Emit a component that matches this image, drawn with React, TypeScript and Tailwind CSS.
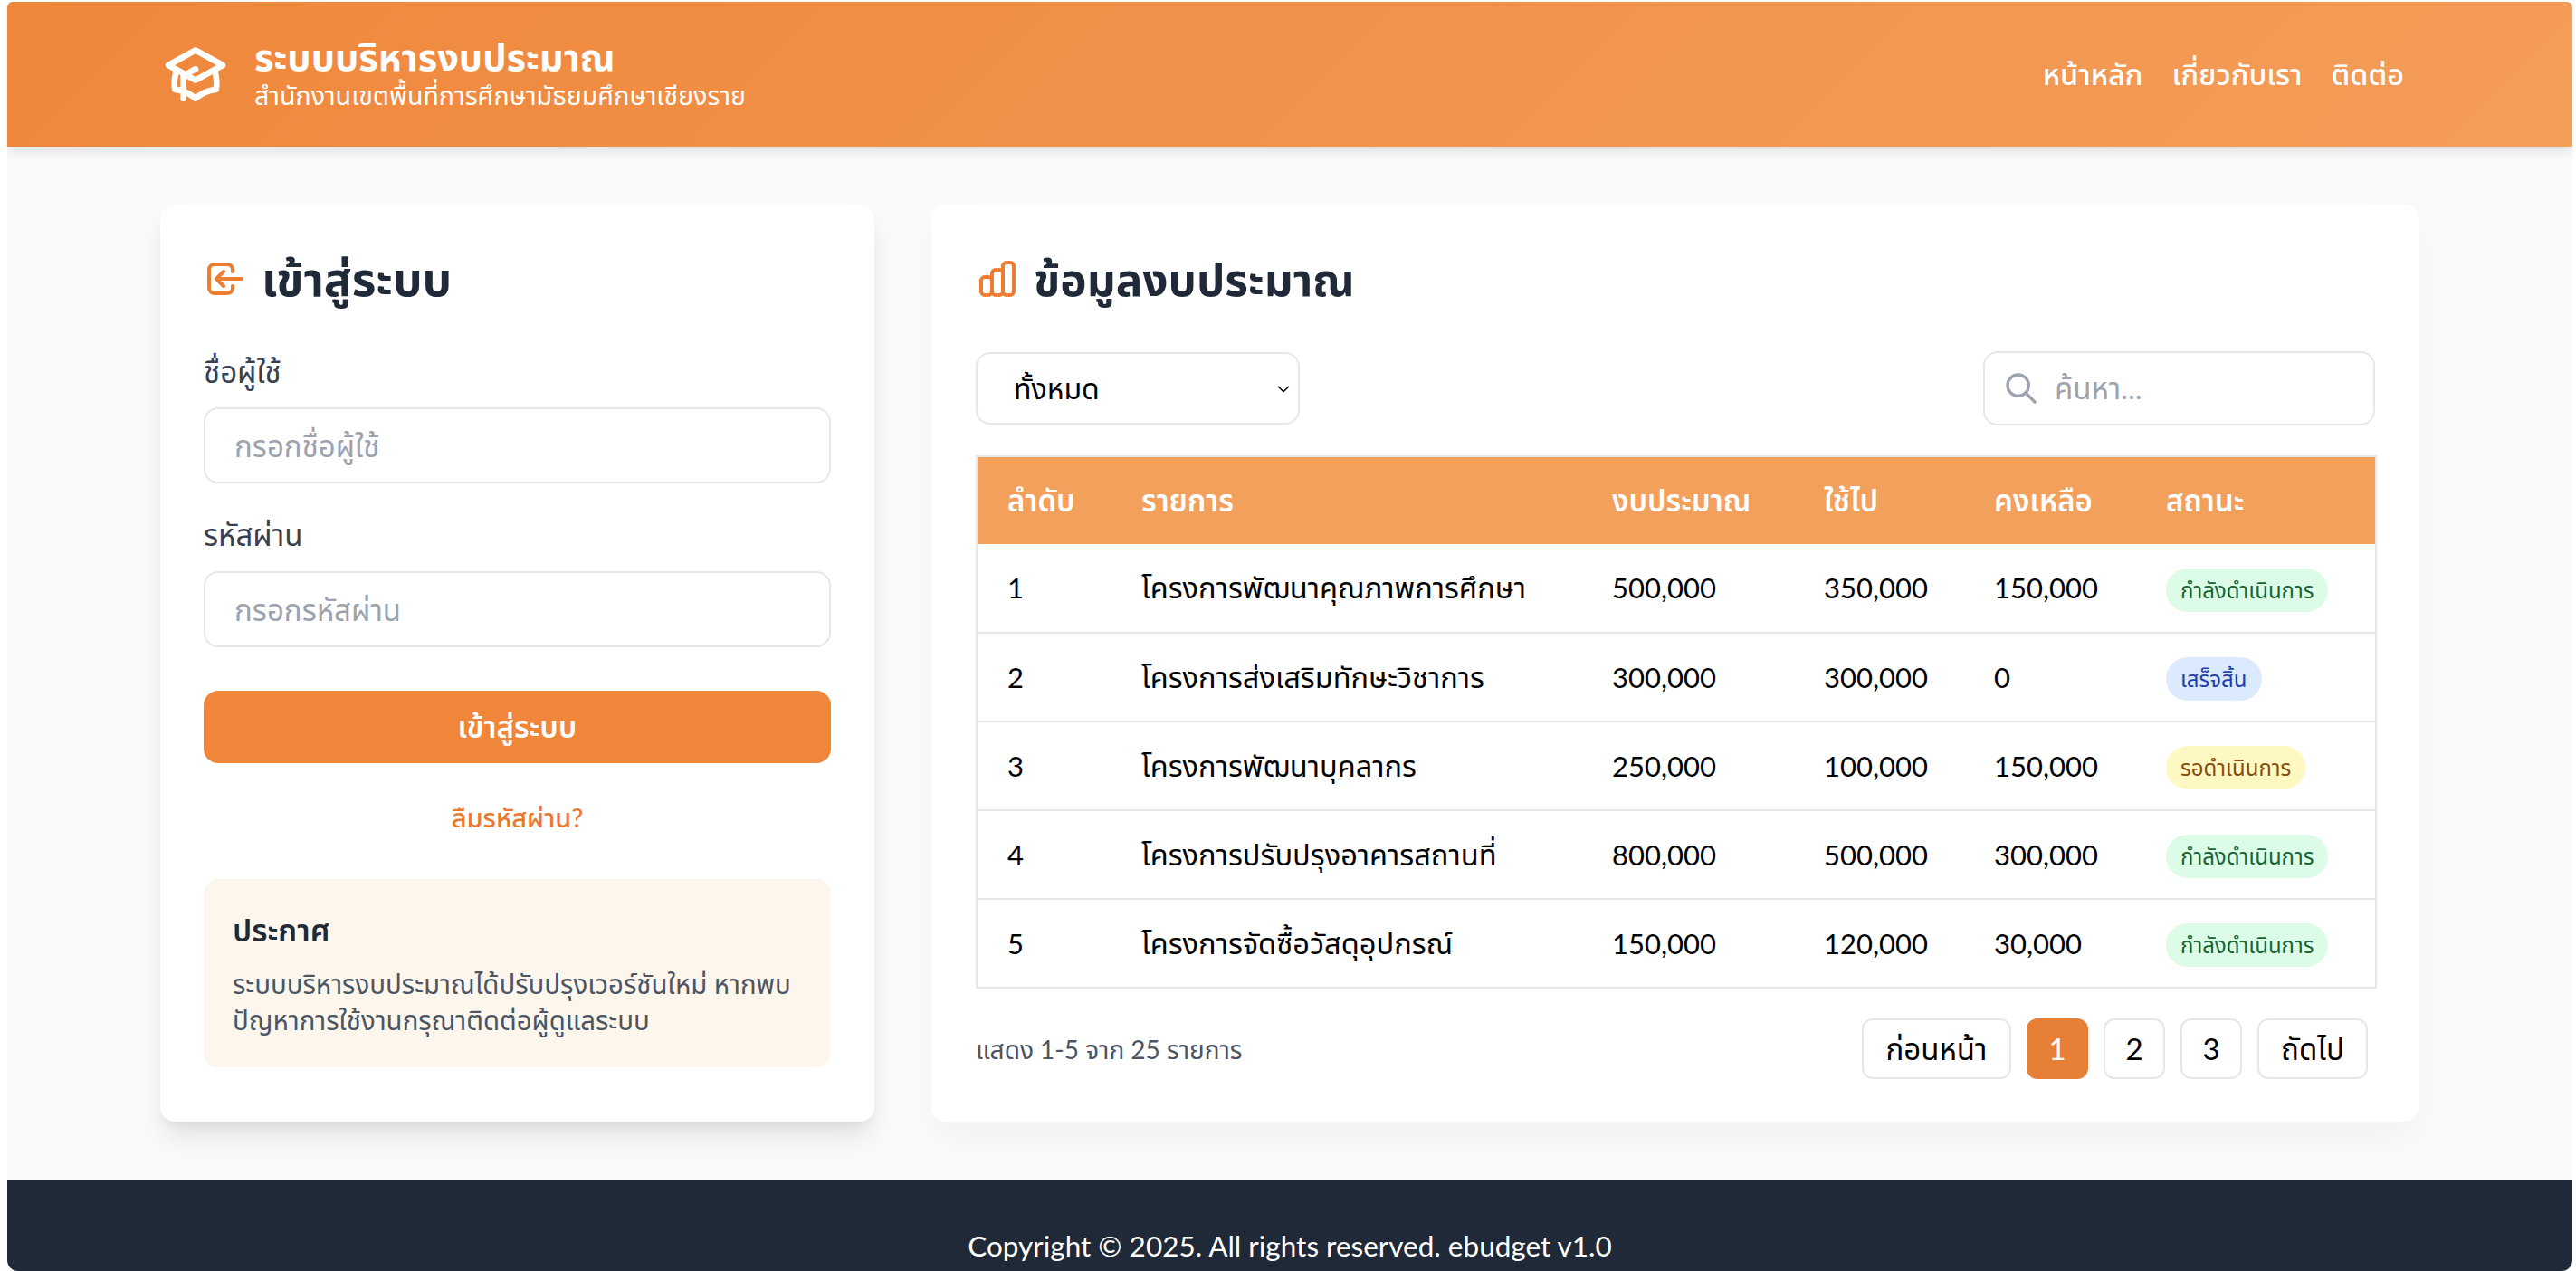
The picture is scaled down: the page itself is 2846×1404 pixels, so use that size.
import React from 'react';
import { ChevronDown } from 'lucide-react';

const rows = [
  { no: 1, name: 'โครงการพัฒนาคุณภาพการศึกษา', budget: '500,000', used: '350,000', left: '150,000', status: 'กำลังดำเนินการ', tone: 'bg-[#dcfce7] text-[#166534]' },
  { no: 2, name: 'โครงการส่งเสริมทักษะวิชาการ', budget: '300,000', used: '300,000', left: '0', status: 'เสร็จสิ้น', tone: 'bg-[#dbeafe] text-[#1e40af]' },
  { no: 3, name: 'โครงการพัฒนาบุคลากร', budget: '250,000', used: '100,000', left: '150,000', status: 'รอดำเนินการ', tone: 'bg-[#fef9c3] text-[#854d0e]' },
  { no: 4, name: 'โครงการปรับปรุงอาคารสถานที่', budget: '800,000', used: '500,000', left: '300,000', status: 'กำลังดำเนินการ', tone: 'bg-[#dcfce7] text-[#166534]' },
  { no: 5, name: 'โครงการจัดซื้อวัสดุอุปกรณ์', budget: '150,000', used: '120,000', left: '30,000', status: 'กำลังดำเนินการ', tone: 'bg-[#dcfce7] text-[#166534]' },
];

function Icon({ d, className, strokeWidth = 2 }: { d: string; className: string; strokeWidth?: number }) {
  return (
    <svg viewBox="0 0 24 24" fill="none" stroke="currentColor" strokeWidth={strokeWidth} strokeLinecap="round" strokeLinejoin="round" className={className}>
      <path d={d} />
    </svg>
  );
}

const capPath =
  'M12 14l9-5-9-5-9 5 9 5zm0 0l6.16-3.422a12.083 12.083 0 01.665 6.479A11.952 11.952 0 0012 20.055a11.952 11.952 0 00-6.824-2.998 12.078 12.078 0 01.665-6.479L12 14zm-4 6v-7.5l4-2.222';
const loginPath = 'M11 16l-4-4m0 0l4-4m-4 4h14m-5 4v1a3 3 0 01-3 3H6a3 3 0 01-3-3V7a3 3 0 013-3h7a3 3 0 013 3v1';
const chartPath =
  'M9 19v-6a2 2 0 00-2-2H5a2 2 0 00-2 2v6a2 2 0 002 2h2a2 2 0 002-2zm0 0V9a2 2 0 012-2h2a2 2 0 012 2v10m-6 0a2 2 0 002 2h2a2 2 0 002-2m0 0V5a2 2 0 012-2h2a2 2 0 012 2v14a2 2 0 01-2 2h-2a2 2 0 01-2-2z';
const searchPath = 'M21 21l-6-6m2-5a7 7 0 11-14 0 7 7 0 0114 0z';

export default function App() {
  return (
    <div className='h-[1404px] overflow-hidden bg-white pl-2 pr-1 pt-[2px] font-["Lato","Noto_Sans_Thai","Noto_Sans",sans-serif]'>
      <div className="flex h-full flex-col overflow-hidden rounded-b-xl rounded-t-md bg-[#f9fafb]">
        {/* Header */}
        <header className="flex h-[160px] shrink-0 items-center justify-between bg-linear-[135deg] from-[#ef873b] to-[#f49d59] pl-[168px] pr-[186px] text-white shadow-[0_4px_12px_rgba(0,0,0,0.12)]">
          <div className="flex items-center gap-[25px]">
            <Icon d={capPath} className="h-[80px] w-[80px]" />
            <div>
              <h1 className="text-[41.5px] font-bold leading-[46px]">ระบบบริหารงบประมาณ</h1>
              <p className="text-[28.6px] leading-[40px]">สำนักงานเขตพื้นที่การศึกษามัธยมศึกษาเชียงราย</p>
            </div>
          </div>
          <nav className="flex gap-8 text-[32.4px] font-medium">
            <a>หน้าหลัก</a>
            <a>เกี่ยวกับเรา</a>
            <a>ติดต่อ</a>
          </nav>
        </header>

        {/* Main */}
        <main className="flex flex-1 items-start gap-[63px] pl-[169px] pr-[170px] pt-[64px]">
          <section className="h-[1013px] w-[789px] shrink-0 rounded-[16px] bg-white p-12 shadow-[0_20px_30px_-5px_rgba(0,0,0,0.1),0_8px_12px_-4px_rgba(0,0,0,0.05)]">
            <h2 className="flex h-[68px] items-center gap-4 text-[51.5px] font-bold text-[#1f2937]">
              <Icon d={loginPath} className="h-12 w-12 text-[#ed7d31]" />
              เข้าสู่ระบบ
            </h2>
            <div className="mt-[44px]">
              <label className="block h-[48px] text-[33px] leading-[48px] text-[#374151]">ชื่อผู้ใช้</label>
              <input placeholder="กรอกชื่อผู้ใช้" className="mt-[16px] h-[84px] w-full rounded-[16px] border-2 border-[#e5e7eb] px-[32px] text-[33px] placeholder:text-[#9ca3af]" />
            </div>
            <div className="mt-[32px]">
              <label className="block h-[48px] text-[33px] leading-[48px] text-[#374151]">รหัสผ่าน</label>
              <input placeholder="กรอกรหัสผ่าน" className="mt-[17px] h-[84px] w-full rounded-[16px] border-2 border-[#e5e7eb] px-[32px] text-[33px] placeholder:text-[#9ca3af]" />
            </div>
            <button className="mt-[48px] h-[80px] w-full rounded-[16px] bg-[#f0863a] text-[33px] font-semibold text-white">เข้าสู่ระบบ</button>
            <div className="mt-[40px] text-center text-[29px] font-medium leading-[40px] text-[#e87a30]">ลืมรหัสผ่าน?</div>
            <div className="mt-[48px] rounded-[16px] bg-[#fdf6ec] p-[32px]">
              <h3 className="text-[34px] font-semibold leading-[48px] text-[#1f2937]">ประกาศ</h3>
              <p className="mt-[16px] text-[29.4px] leading-[40px] text-[#4b5563]">ระบบบริหารงบประมาณได้ปรับปรุงเวอร์ชันใหม่ หากพบปัญหาการใช้งานกรุณาติดต่อผู้ดูแลระบบ</p>
            </div>
          </section>

          <section className="h-[1013px] w-[1643px] shrink-0 rounded-[16px] bg-white px-[49px] pt-12 shadow-[0_20px_40px_-5px_rgba(0,0,0,0.04)]">
            <h2 className="flex h-[68px] items-center gap-4 text-[49.5px] font-bold text-[#1f2937]">
              <Icon d={chartPath} className="h-12 w-12 text-[#ed7d31]" />
              ข้อมูลงบประมาณ
            </h2>
            <div className="mt-[46px] flex w-[1546px] items-center justify-between">
              <div className="relative flex h-[80px] w-[358px] items-center rounded-[16px] border-2 border-[#e5e7eb] pl-[40px] text-[32px] text-black">
                ทั้งหมด
                <ChevronDown className="absolute right-[5px] top-[28px] h-[22px] w-[22px]" strokeWidth={1.5} />
              </div>
              <div className="flex h-[82px] w-[433px] items-center gap-[17px] rounded-[16px] border-2 border-[#e5e7eb] pl-[20px]">
                <Icon d={searchPath} className="h-10 w-10 text-[#9ca3af]" />
                <input placeholder="ค้นหา..." className="min-w-0 flex-1 text-[33px] placeholder:text-[#9ca3af]" />
              </div>
            </div>
            <table className="mt-[33px] w-[1546px] table-fixed border-collapse border-2 border-[#e5e7eb] text-[33px] text-black">
              <thead>
                <tr className="h-[97px] bg-[#f2a05c] text-left text-white">
                  <th className="w-[149px] pl-[33px] font-semibold">ลำดับ</th>
                  <th className="w-[520px] pl-[33px] font-semibold">รายการ</th>
                  <th className="w-[234px] pl-[33px] font-semibold">งบประมาณ</th>
                  <th className="w-[188px] pl-[33px] font-semibold">ใช้ไป</th>
                  <th className="w-[190px] pl-[33px] font-semibold">คงเหลือ</th>
                  <th className="w-[265px] pl-[33px] font-semibold">สถานะ</th>
                </tr>
              </thead>
              <tbody>
                {rows.map((r) => (
                  <tr key={r.no} className="h-[98px] border-b-2 border-[#e5e7eb]">
                    <td className="pl-[33px] text-[31px]">{r.no}</td>
                    <td className="pl-[33px] text-[32.6px]">{r.name}</td>
                    <td className="pl-[33px] text-[31px]">{r.budget}</td>
                    <td className="pl-[33px] text-[31px]">{r.used}</td>
                    <td className="pl-[33px] text-[31px]">{r.left}</td>
                    <td className="pl-[33px]">
                      <span className={`inline-flex h-[48px] items-center rounded-full px-[16px] text-[24px] ${r.tone}`}>{r.status}</span>
                    </td>
                  </tr>
                ))}
              </tbody>
            </table>
            <div className="mt-[33px] flex w-[1546px] items-center justify-between pr-[8px]">
              <span className="text-[28px] text-[#4b5563]">แสดง 1-5 จาก 25 รายการ</span>
              <div className="flex gap-[17px] text-[33px] text-black">
                <button className="h-[67px] w-[165px] rounded-[12px] border-2 border-[#e5e7eb]">ก่อนหน้า</button>
                <button className="h-[67px] w-[68px] rounded-[12px] bg-[#e87f36] text-white">1</button>
                <button className="h-[67px] w-[68px] rounded-[12px] border-2 border-[#e5e7eb]">2</button>
                <button className="h-[67px] w-[68px] rounded-[12px] border-2 border-[#e5e7eb]">3</button>
                <button className="h-[67px] w-[122px] rounded-[12px] border-2 border-[#e5e7eb]">ถัดไป</button>
              </div>
            </div>
          </section>
        </main>

        {/* Footer */}
        <footer className="flex h-[100px] shrink-0 items-end justify-center bg-[#1f2937] pb-[4px] text-[31.5px] text-white">
          Copyright © 2025. All rights reserved. ebudget v1.0
        </footer>
      </div>
    </div>
  );
}
